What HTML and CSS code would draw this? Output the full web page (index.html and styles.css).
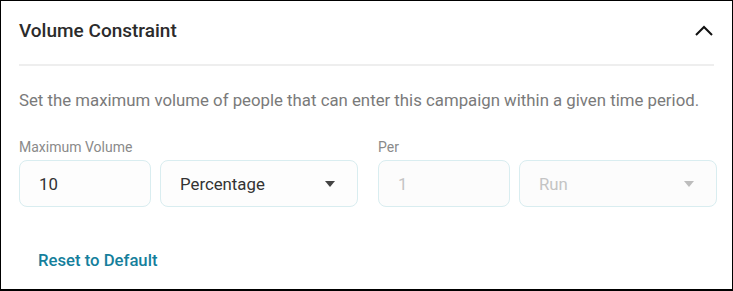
FILE: index.html
```html
<!DOCTYPE html>
<html>
<head>
<meta charset="utf-8">
<link rel="stylesheet" href="styles.css">
</head>
<body>
<section class="panel">
  <header class="panel-head">
    <h2 class="title">Volume Constraint</h2>
    <svg class="chevron" width="18" height="11" viewBox="0 0 18 11"><path d="M1 10 L9 2 L17 10" fill="none" stroke="#111" stroke-width="2"/></svg>
  </header>
  <div class="divider"></div>
  <p class="desc">Set the maximum volume of people that can enter this campaign within a given time period.</p>
  <div class="fields">
    <div class="group">
      <label class="label">Maximum Volume</label>
      <div class="row">
        <div class="box num">10</div>
        <div class="box sel">Percentage<span class="caret"></span></div>
      </div>
    </div>
    <div class="group disabled">
      <label class="label">Per</label>
      <div class="row">
        <div class="box num">1</div>
        <div class="box sel">Run<span class="caret"></span></div>
      </div>
    </div>
  </div>
  <a class="reset">Reset to Default</a>
</section>
</body>
</html>
```
FILE: styles.css
```css
html, body { margin: 0; padding: 0; background: #fff; }
body { font-family: Roboto, "Noto Sans", sans-serif; }
.panel {
  box-sizing: border-box;
  width: 733px;
  height: 291px;
  border: 1px solid #000;
  border-bottom-width: 2px;
  padding: 0 18px;
}
.panel-head {
  display: flex;
  align-items: center;
  justify-content: space-between;
  box-sizing: border-box;
  height: 63px;
  padding-bottom: 4px;
}
.title {
  margin: 0;
  font-size: 19px;
  font-weight: 500;
  color: #2b2b2b;
}
.chevron { margin-right: 1px; }
.divider { height: 2px; background: #eeeeee; }
.desc {
  margin: 24px 0 0;
  font-size: 16.8px;
  line-height: 20px;
  color: #7a7a7a;
}
.fields { display: flex; gap: 20px; margin-top: 29px; }
.label { display: block; font-size: 14px; line-height: 17px; color: #8a8a8a; margin-bottom: 4px; }
.row { display: flex; gap: 9px; }
.box {
  box-sizing: border-box;
  height: 47px;
  border: 1px solid #d9edf0;
  border-radius: 8px;
  background: #fdfdfd;
  display: flex;
  align-items: center;
  padding: 0 19px;
  font-size: 16.8px;
  color: #333;
}
.num { width: 132px; }
.sel { width: 198px; justify-content: space-between; padding-right: 22px; }
.caret {
  width: 0; height: 0;
  border-left: 5px solid transparent;
  border-right: 5px solid transparent;
  border-top: 6px solid #444;
}
.disabled .box { color: #c4c4c4; background: #fcfcfc; }
.disabled .caret { border-top-color: #bdbdbd; }
.reset {
  display: inline-block;
  margin: 44px 0 0 19px;
  font-size: 16.7px;
  font-weight: 500;
  color: #157f9c;
}
```
